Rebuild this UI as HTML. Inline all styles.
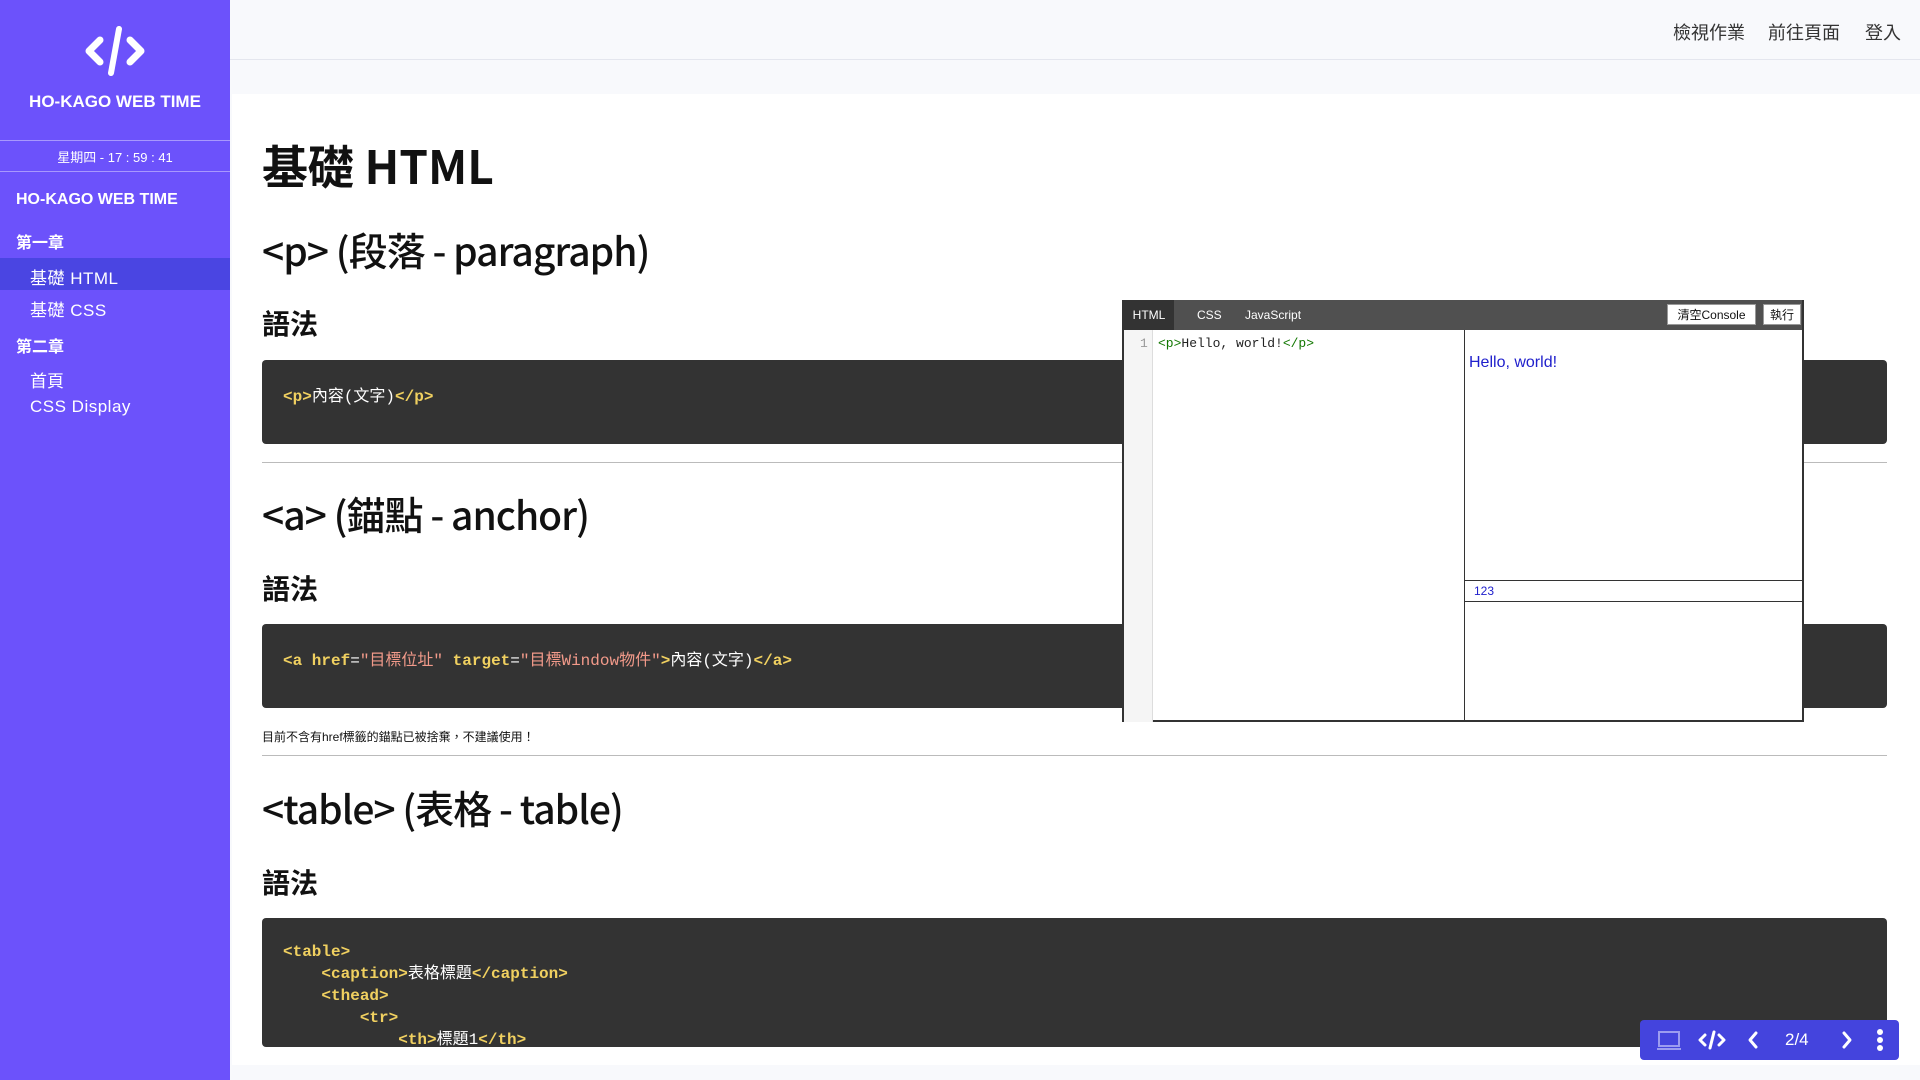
<!DOCTYPE html>
<html><head><meta charset="utf-8">
<style>
*{box-sizing:border-box;margin:0;padding:0}
body{width:1920px;height:1080px;overflow:hidden;background:#f8f9fc;font-family:"Liberation Sans","Noto Sans CJK TC",sans-serif;position:relative;color:#111}
.side{position:absolute;left:0;top:0;width:230px;height:1080px;background:#6c52fb;color:#fff}
.abs{position:absolute}
.hdr{position:absolute;left:230px;top:0;right:0;height:60px;border-bottom:1px solid #e4e6ee;background:#f8f9fc}
.hdr span{position:absolute;top:19px;font-size:18px;color:#333}
.main{position:absolute;left:232px;top:94px;width:1688px;height:971px;background:#fff}
h1,h2,h3{position:absolute;left:30px;font-weight:bold;white-space:nowrap;font-family:"Noto Sans CJK TC","Liberation Sans",sans-serif}
h2{font-weight:500;letter-spacing:-1px}
.code{position:absolute;left:30px;width:1625px;background:#333;border-radius:4px;font-family:"Liberation Mono","Noto Sans CJK TC",monospace;font-size:16px;color:#fff;padding-left:21px}
.t{color:#f0d060;font-weight:bold}.s{color:#f29a8a}
.hr{position:absolute;left:30px;width:1625px;height:1px;background:#bbb}
.ed{position:absolute;left:1122px;top:300px;width:682px;height:422px;background:#fff;border:2px solid #333;border-top:0}
.tb{height:30px;background:#505050;position:relative}
.tb span{position:absolute;top:0;height:30px;line-height:30px;font-size:12px;color:#fff}
.btn{position:absolute;top:4px;height:21px;background:#fff;color:#111;font-size:12px;line-height:21px;text-align:center;border:1px solid #999}
.tool{position:absolute;left:1640px;top:1020px;width:259px;height:40px;background:#4444dd;border-radius:4px;color:#fff}
</style></head><body>
<div class="side">
<svg class="abs" style="left:84px;top:26px" width="62" height="50" viewBox="0 0 62 50"><path d="M16 14 L5 25 L16 36" stroke="#fff" stroke-width="7" fill="none" stroke-linecap="round" stroke-linejoin="round"/><path d="M46 14 L57 25 L46 36" stroke="#fff" stroke-width="7" fill="none" stroke-linecap="round" stroke-linejoin="round"/><path d="M35 3 L27 47" stroke="#fff" stroke-width="6" stroke-linecap="round"/></svg>
<div class="abs" style="left:0;width:230px;top:92px;text-align:center;font-size:17px;font-weight:bold">HO-KAGO WEB TIME</div>
<div class="abs" style="left:0;width:230px;top:140px;height:1px;background:#a898fd"></div>
<div class="abs" style="left:0;width:230px;top:147px;text-align:center;font-size:13px">星期四 - 17 : 59 : 41</div>
<div class="abs" style="left:0;width:230px;top:171px;height:1px;background:#a898fd"></div>
<div class="abs" style="left:16px;top:191px;font-size:16px;font-weight:bold">HO-KAGO WEB TIME</div>
<div class="abs" style="left:16px;top:229px;font-size:16px;font-weight:bold">第一章</div>
<div class="abs" style="left:0;top:258px;width:230px;height:32px;background:#4a45e2"></div>
<div class="abs" style="left:30px;top:264px;font-size:17px;letter-spacing:0.5px">基礎 HTML</div>
<div class="abs" style="left:30px;top:296px;font-size:17px;letter-spacing:0.5px">基礎 CSS</div>
<div class="abs" style="left:16px;top:333px;font-size:16px;font-weight:bold">第二章</div>
<div class="abs" style="left:30px;top:367px;font-size:17px">首頁</div>
<div class="abs" style="left:30px;top:397px;font-size:17px;letter-spacing:0.5px">CSS Display</div>
</div>
<div class="hdr"><span style="left:1443px">檢視作業</span><span style="left:1538px">前往頁面</span><span style="left:1635px">登入</span></div>
<div class="main">
<h1 style="top:38px;font-size:46px">基礎 HTML</h1>
<h2 style="top:128px;font-size:39px">&lt;p&gt; (段落 - paragraph)</h2>
<h3 style="top:209px;font-size:28px">語法</h3>
<div class="code" style="top:266px;height:84px;padding-top:22px"><span class="t">&lt;p&gt;</span>內容(文字)<span class="t">&lt;/p&gt;</span></div>
<div class="hr" style="top:368px"></div>
<h2 style="top:392px;font-size:39px">&lt;a&gt; (錨點 - anchor)</h2>
<h3 style="top:474px;font-size:28px">語法</h3>
<div class="code" style="top:530px;height:84px;padding-top:22px"><span class="t">&lt;a href</span>=<span class="s">"目標位址"</span> <span class="t">target</span>=<span class="s">"目標Window物件"</span><span class="t">&gt;</span>內容(文字)<span class="t">&lt;/a&gt;</span></div>
<div class="abs" style="left:30px;top:634px;font-size:12px">目前不含有href標籤的錨點已被捨棄，不建議使用！</div>
<div class="hr" style="top:661px"></div>
<h2 style="top:686px;font-size:39px">&lt;table&gt; (表格 - table)</h2>
<h3 style="top:768px;font-size:28px">語法</h3>
<div class="code" style="top:824px;height:129px;padding-top:23px;line-height:22px;white-space:pre"><span class="t">&lt;table&gt;</span>
    <span class="t">&lt;caption&gt;</span>表格標題<span class="t">&lt;/caption&gt;</span>
    <span class="t">&lt;thead&gt;</span>
        <span class="t">&lt;tr&gt;</span>
            <span class="t">&lt;th&gt;</span>標題1<span class="t">&lt;/th&gt;</span></div>
</div>
<div class="ed">
<div class="tb"><span style="left:0;width:50px;background:#333;text-align:center">HTML</span><span style="left:73px">CSS</span><span style="left:121px">JavaScript</span>
<div class="btn" style="left:543px;width:89px">清空Console</div><div class="btn" style="left:639px;width:38px">執行</div></div>
<div class="abs" style="left:0;top:30px;width:29px;height:392px;background:#f5f5f5;border-right:1px solid #ddd"></div>
<div class="abs" style="left:16px;top:36px;font-family:'Liberation Mono',monospace;font-size:13px;color:#999">1</div>
<div class="abs" style="left:34px;top:36px;font-family:'Liberation Mono',monospace;font-size:13px;color:#222"><span style="color:#170">&lt;p&gt;</span>Hello, world!<span style="color:#170">&lt;/p&gt;</span></div>
<div class="abs" style="left:340px;top:30px;width:1px;height:392px;background:#333"></div>
<div class="abs" style="left:345px;top:54px;font-size:16px;color:#2020cc">Hello, world!</div>
<div class="abs" style="left:340px;top:280px;width:340px;height:1px;background:#333"></div>
<div class="abs" style="left:340px;top:301px;width:340px;height:1px;background:#333"></div>
<div class="abs" style="left:350px;top:284px;font-size:12px;color:#2020cc">123</div>
</div>
<div class="tool">
<svg class="abs" style="left:16px;top:10px" width="26" height="22" viewBox="0 0 26 22"><rect x="3" y="2" width="20" height="14" fill="none" stroke="#9c9cf0" stroke-width="2"/><path d="M1 19 H25" stroke="#9c9cf0" stroke-width="2"/></svg>
<svg class="abs" style="left:58px;top:10px" width="28" height="20" viewBox="0 0 28 20"><path d="M7 5 L2 10 L7 15 M21 5 L26 10 L21 15" stroke="#fff" stroke-width="3" fill="none" stroke-linecap="round" stroke-linejoin="round"/><path d="M16 2 L12 18" stroke="#fff" stroke-width="3" stroke-linecap="round"/></svg>
<svg class="abs" style="left:106px;top:10px" width="14" height="20" viewBox="0 0 14 20"><path d="M10 3 L4 10 L10 17" stroke="#fff" stroke-width="3" fill="none" stroke-linecap="round" stroke-linejoin="round"/></svg>
<div class="abs" style="left:145px;top:10px;font-size:17px">2/4</div>
<svg class="abs" style="left:200px;top:10px" width="14" height="20" viewBox="0 0 14 20"><path d="M4 3 L10 10 L4 17" stroke="#fff" stroke-width="3" fill="none" stroke-linecap="round" stroke-linejoin="round"/></svg>
<svg class="abs" style="left:236px;top:8px" width="8" height="24" viewBox="0 0 8 24"><circle cx="4" cy="4" r="3" fill="#fff"/><circle cx="4" cy="12" r="3" fill="#fff"/><circle cx="4" cy="20" r="3" fill="#fff"/></svg>
</div>
</body></html>
